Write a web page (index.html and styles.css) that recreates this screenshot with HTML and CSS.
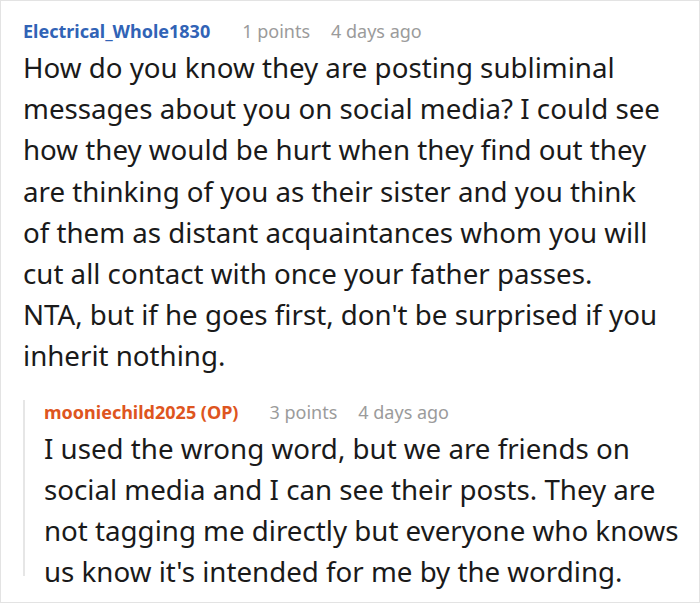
FILE: index.html
```html
<!DOCTYPE html>
<html>
<head>
<meta charset="utf-8">
<link rel="stylesheet" href="styles.css">
</head>
<body>
<div class="card">
  <div class="comment">
    <div class="meta">
      <span class="user">Electrical_Whole1830</span>
      <span class="info">1 points</span>
      <span class="info">4 days ago</span>
    </div>
    <p class="text text-main">How do you know they are posting subliminal messages about you on social media? I could see how they would be hurt when they find out they are thinking of you as their sister and you think of them as distant acquaintances whom you will cut all contact with once your father passes.<br>NTA, but if he goes first, don't be surprised if you inherit nothing.</p>
    <div class="reply">
      <div class="meta meta-reply">
        <span class="user op">mooniechild2025 (OP)</span>
        <span class="info">3 points</span>
        <span class="info">4 days ago</span>
      </div>
      <p class="text text-reply">I used the wrong word, but we are friends on social media and I can see their posts. They are not tagging me directly but everyone who knows us know it's intended for me by the wording.</p>
    </div>
  </div>
</div>
</body>
</html>
```
FILE: styles.css
```css
html, body {
  margin: 0;
  padding: 0;
  background: #ffffff;
}
.card {
  box-sizing: border-box;
  width: 700px;
  height: 603px;
  border: 1px solid #e3e3e3;
  overflow: hidden;
  font-family: "Noto Sans", "Open Sans", sans-serif;
}
.comment {
  padding: 18px 8px 0 22px;
}
.meta {
  display: flex;
  align-items: baseline;
  gap: 21px;
  font-size: 18px;
  line-height: 24px;
  white-space: nowrap;
}
.user {
  font-weight: 700;
  color: #3163b6;
  margin-right: 11px;
}
.info {
  color: #9b9b9b;
}
.text {
  margin: 4px 0 0;
  font-size: 27.7px;
  line-height: 41.2px;
  color: #1a1a1a;
}
.text-main {
  max-width: 642px;
}
.reply {
  margin-top: 35px;
  height: 176px;
  border-left: 2px solid #e6e6e6;
  padding-left: 19px;
}
.meta-reply {
  margin-top: -12px;
}
.text-reply {
  margin-top: 4px;
  max-width: 648px;
}
.op {
  color: #de5520;
  margin-right: 10px;
}
```
